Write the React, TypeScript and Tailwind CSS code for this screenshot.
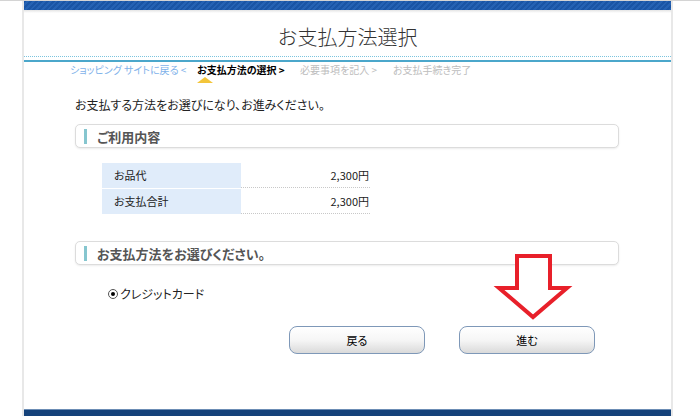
const jp = '"Noto Sans CJK JP", "Noto Sans", sans-serif';

function SectionHeader({ title }: { title: string }) {
  return (
    <div className="flex h-[24px] w-[544px] items-center rounded-[5px] border border-[#dcdcdc] bg-white shadow-[0_1px_2px_rgba(0,0,0,0.08)]">
      <span className="ml-[8px] h-[15px] w-[3px] bg-[#86c6cf]" />
      <span className="ml-[10px] text-[13px] font-bold leading-none text-[#555]">{title}</span>
    </div>
  );
}

const rows = [
  { label: 'お品代', value: '2,300円' },
  { label: 'お支払合計', value: '2,300円' },
];

export default function App() {
  return (
    <div
      className="relative h-[416px] w-[700px] overflow-hidden border-t border-[#d4d4d4] bg-white [font-feature-settings:'palt']"
      style={{ fontFamily: jp }}
    >
      <div className="ml-[22px] flex h-full w-[651px] flex-col border-x-2 border-[#e8e8e8]">
        {/* top stripe bar */}
        <div className="h-[9px] shrink-0 bg-[repeating-linear-gradient(135deg,#1a55a5_0px,#1a55a5_2px,#2562b3_2px,#2562b3_4px)]" />
        <div className="h-[3px] shrink-0 bg-gradient-to-b from-[#e4e4e4] to-white" />

        <h1 className="mt-[10px] text-center text-[20px] font-light leading-[28px] text-[#333] [font-feature-settings:normal]">お支払方法選択</h1>
        <div className="mt-[5px] border-t border-dotted border-[#7cc4de]" />
        <div className="mt-[3px] h-[2px] shrink-0 bg-[#4ba7cb]" />

        {/* breadcrumb */}
        <div className="mt-[1px] flex whitespace-nowrap pl-[46px] text-[10px] leading-[14px]">
          <span className="w-[127px] shrink-0 text-[#7fb2ea]">ショッピング サイトに戻る &lt;</span>
          <span className="relative w-[103px] shrink-0 font-bold text-black">
            お支払方法の選択 &gt;
            <span className="absolute left-0 top-[14px] h-0 w-0 border-x-[8px] border-b-[6px] border-x-transparent border-b-[#f3c53a]" />
          </span>
          <span className="w-[93px] shrink-0 text-[#bdbdbd]">必要事項を記入 &gt;</span>
          <span className="shrink-0 text-[#bdbdbd]">お支払手続き完了</span>
        </div>

        <div className="pl-[51px]">
          <p className="mt-[20px] text-[12px] leading-[16px] text-[#222]">お支払する方法をお選びになり、お進みください。</p>

          <div className="mt-[11px]">
            <SectionHeader title="ご利用内容" />
          </div>

          <div className="ml-[27px] mt-[15px] flex w-[268px] flex-col gap-[1px]">
            {rows.map((r) => (
              <div key={r.label} className="flex h-[25px] text-[11px]">
                <div className="flex w-[139px] items-center bg-[#e0ecfa] pl-[12px] text-[#222]">{r.label}</div>
                <div className="flex flex-1 items-center justify-end border-b border-dotted border-[#c8c8c8] pr-[1px] text-[#222]">{r.value}</div>
              </div>
            ))}
          </div>

          <div className="mt-[27px]">
            <SectionHeader title="お支払方法をお選びください。" />
          </div>

          <div className="ml-[33px] mt-[21px] flex h-[16px] items-center text-[12px] text-[#222]">
            <span className="flex h-[10px] w-[10px] items-center justify-center rounded-full border border-[#555] bg-white">
              <span className="h-[4px] w-[4px] rounded-full bg-black" />
            </span>
            <span className="ml-[2px]">クレジットカード</span>
          </div>

          <div className="ml-[214px] mt-[24px] flex gap-[34px]">
            <button className="h-[28px] w-[136px] rounded-[8px] border border-[#7e98b8] bg-gradient-to-b from-white via-[#f6f6f6] to-[#dadada] text-[11px] text-black">戻る</button>
            <button className="h-[28px] w-[136px] rounded-[8px] border border-[#7e98b8] bg-gradient-to-b from-white via-[#f6f6f6] to-[#dadada] text-[11px] text-black">進む</button>
          </div>
        </div>

        <div className="mt-auto h-[7px] shrink-0 border-t border-[#6c8db5] bg-[#15427a]" />
      </div>

      {/* red arrow pointing at the next button */}
      <svg className="absolute left-[490px] top-[250px]" width="90" height="75" viewBox="0 0 90 75">
        <polygon
          points="27,5 60,5 60,37 77,37 43,66 9,37 27,37"
          fill="white"
          stroke="#e8202a"
          strokeWidth="4"
          strokeLinejoin="miter"
        />
      </svg>
    </div>
  );
}
